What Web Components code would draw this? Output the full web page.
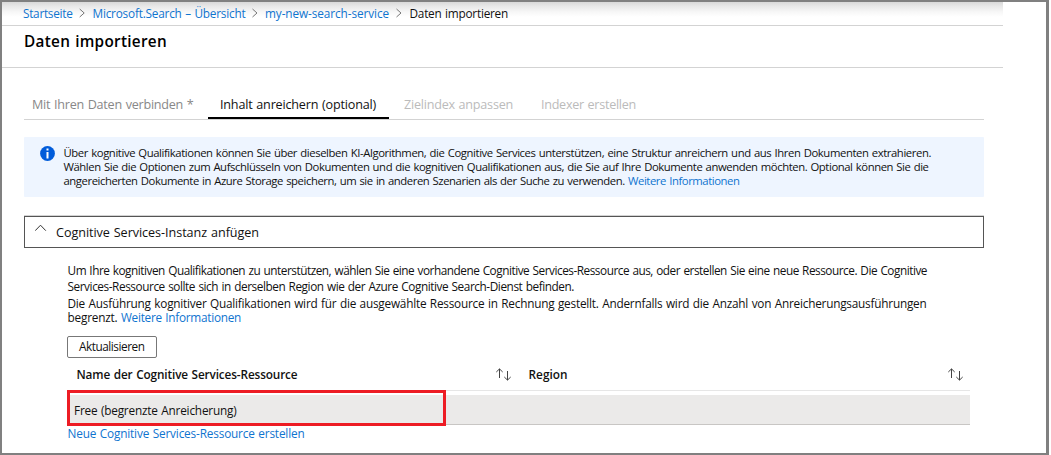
<!DOCTYPE html>
<html lang="de">
<head>
<meta charset="utf-8">
<title>Daten importieren</title>
<style>
html,body{margin:0;background:#fff}
body{font-family:"Open Sans","Noto Sans",sans-serif;font-size:12px;color:#111}
</style>
</head>
<body>
<import-page></import-page>
<script>
const define=(name,html,ready)=>{
  const t=document.createElement('template');t.innerHTML=html;
  customElements.define(name,class extends HTMLElement{
    constructor(){super();this.attachShadow({mode:'open'}).append(t.content.cloneNode(true));}
    connectedCallback(){if(ready)ready.call(this);}
  });
};

/* One line of text whose tracking is adjusted so that it takes up the width "w". */
define('text-run','<style>:host{display:inline-block;white-space:pre;line-height:16px;height:16px;word-spacing:.7px}span{display:inline-block}</style><span><slot></slot></span>',function(){
  const w=+this.getAttribute('w'),n=this.textContent.length;
  this.style.width=w+'px';
  const natural=this.shadowRoot.querySelector('span').getBoundingClientRect().width;
  this.style.letterSpacing=((w-natural)/n).toFixed(4)+'px';
});

define('crumb-bar',`<style>
:host{display:flex;box-sizing:border-box;width:1001px;height:24px;padding:3px 0 0 21px;border-bottom:1px solid #d3d3d3;background:linear-gradient(#d9d9d9,#e7e7e7 4px,#f7f7f7 10px,#fff 15px);color:#0f74cf;font-size:11.8px}
svg{display:block;margin-top:3px;flex:none}.now{color:#111}
</style>
<text-run w="49.5">Startseite</text-run>
<svg width="20" height="10" viewBox="0 0 20 10"><path d="M6.7 1L11.2 5L6.7 9" fill="none" stroke="#777"/></svg>
<text-run w="153">Microsoft.Search – Übersicht</text-run>
<svg width="19.5" height="10" viewBox="0 0 19.5 10"><path d="M6.5 1L11 5L6.5 9" fill="none" stroke="#777"/></svg>
<text-run w="124">my-new-search-service</text-run>
<svg width="20.5" height="10" viewBox="0 0 20.5 10"><path d="M7.5 1L12 5L7.5 9" fill="none" stroke="#777"/></svg>
<text-run class="now" w="98.5">Daten importieren</text-run>`);

define('page-title',`<style>:host{display:block;box-sizing:border-box;width:1001px;height:42px;padding:5px 0 0 22px;border-bottom:1px solid #d3d3d3;font-size:15.3px;font-weight:600;color:#000}</style><text-run w="143">Daten importieren</text-run>`);

define('wizard-tabs',`<style>
:host{display:flex;margin:28px 0 0 22px;width:960px;height:23px;border-bottom:1px solid #d3d3d3;color:#888;font-size:12.6px}
div{box-sizing:border-box;height:23px}
.a{width:184px;padding-left:8px}.b{width:181px;padding-left:12px;color:#111;border-bottom:2px solid #000}
.c{width:137px;padding-left:15px;color:#bbb}.d{padding-left:15px;color:#bbb}
</style>
<div class="a"><text-run w="161.5">Mit Ihren Daten verbinden *</text-run></div>
<div class="b"><text-run w="156">Inhalt anreichern (optional)</text-run></div>
<div class="c"><text-run w="109">Zielindex anpassen</text-run></div>
<div class="d"><text-run w="95">Indexer erstellen</text-run></div>`);

define('info-banner',`<style>
:host{display:flex;box-sizing:border-box;margin:17px 0 0 22px;width:960px;height:60px;padding:8px 0 0 16px;background:#eef5ff;border-radius:1px;font-size:11.3px}
svg{flex:none;margin:1px 8.5px 0 0}.l{height:14px;display:flex}.k{color:#0f74cf}
</style>
<svg width="15" height="15" viewBox="0 0 15 15"><circle cx="7.5" cy="7.5" r="7.4" fill="#015cda"/><path d="M6.5 2.5h2v2h-2zM6.5 6h2v6.5h-2z" fill="#fff"/></svg>
<div>
<div class="l"><text-run w="867.5">Über kognitive Qualifikationen können Sie über dieselben KI-Algorithmen, die Cognitive Services unterstützen, eine Struktur anreichern und aus Ihren Dokumenten extrahieren.</text-run></div>
<div class="l"><text-run w="865">Wählen Sie die Optionen zum Aufschlüsseln von Dokumenten und die kognitiven Qualifikationen aus, die Sie auf Ihre Dokumente anwenden möchten. Optional können Sie die</text-run></div>
<div class="l"><text-run w="564.5">angereicherten Dokumente in Azure Storage speichern, um sie in anderen Szenarien als der Suche zu verwenden. </text-run><text-run class="k" w="111.5">Weitere Informationen</text-run></div>
</div>`);

define('accordion-head',`<style>
:host{display:flex;box-sizing:border-box;margin:19px 0 0 22px;width:960px;height:32px;border:1px solid #555;box-shadow:0 -1px #d3d3d3;padding:8px 0 0 10px;font-size:12.6px}
svg{margin:-1px 9px 0 0}
</style><svg width="12" height="9" viewBox="0 0 12 9"><path d="M.2 6.7L5.5 1.2L10.8 6.7" fill="none" stroke="#333"/></svg><text-run w="203">Cognitive Services-Instanz anfügen</text-run>`);

define('refresh-button',`<style>
:host{display:block}button{display:block;box-sizing:border-box;width:90px;height:22px;border:1px solid #777;border-radius:2px;background:#fff;padding:0 0 2px 11px;text-align:left;font:11.8px "Open Sans",sans-serif;color:#111}
text-run{display:block}
</style><button><text-run w="65.5">Aktualisieren</text-run></button>`);

define('sort-icon',`<style>:host{display:block;width:16px;height:13px}svg{display:block}</style>
<svg width="16" height="13" viewBox="0 0 16 13"><path d="M4.5 10V1M1.3 4L4.5 .9L7.7 4M12.5 3V12M9.3 9L12.5 12.1L15.7 9" fill="none" stroke="#444"/></svg>`);

define('resource-table',`<style>
:host{display:block;position:relative;width:903px;height:68px;margin-top:0}
.h{display:flex;box-sizing:border-box;height:33px;padding-top:8px;border-bottom:1px solid #e6e6e6;font-weight:600;font-size:11.8px}
.c1,.c2{box-sizing:border-box;display:flex;justify-content:space-between;padding-left:9.5px}
.c1{width:443.5px}.c2{width:459.5px;padding:0 7.5px 0 18px}
sort-icon{margin-top:2px}
.r{box-sizing:border-box;margin-top:4px;height:30px;border-bottom:1px solid #c8c6c4;background:#ebeae9;padding:7px 0 0 7px;font-size:11.8px}
.mark{position:absolute;box-sizing:border-box;left:0;top:32px;width:379px;height:36px;border:3px solid #ed1c24}
</style>
<div class="h"><div class="c1"><text-run w="221">Name der Cognitive Services-Ressource</text-run><sort-icon></sort-icon></div><div class="c2"><text-run w="39">Region</text-run><sort-icon></sort-icon></div></div>
<div class="r"><text-run w="162.5">Free (begrenzte Anreicherung)</text-run></div><div class="mark"></div>`);

define('attach-panel',`<style>
:host{display:block;margin:14px 0 0 65px;font-size:11.8px}
.l{display:flex;height:16px;padding-left:.5px}.k{color:#0f74cf}
.l.x{height:17px}.l.y{height:14px}
refresh-button{margin-top:11px}
.l.z{margin-top:-1px}
</style>
<div class="l"><text-run w="859.5">Um Ihre kognitiven Qualifikationen zu unterstützen, wählen Sie eine vorhandene Cognitive Services-Ressource aus, oder erstellen Sie eine neue Ressource. Die Cognitive</text-run></div>
<div class="l x"><text-run w="506.5">Services-Ressource sollte sich in derselben Region wie der Azure Cognitive Search-Dienst befinden.</text-run></div>
<div class="l y"><text-run w="859">Die Ausführung kognitiver Qualifikationen wird für die ausgewählte Ressource in Rechnung gestellt. Andernfalls wird die Anzahl von Anreicherungsausführungen</text-run></div>
<div class="l"><text-run w="53.5">begrenzt. </text-run><text-run class="k" w="120">Weitere Informationen</text-run></div>
<refresh-button></refresh-button>
<resource-table></resource-table>
<div class="l k z"><text-run w="237">Neue Cognitive Services-Ressource erstellen</text-run></div>`);

define('import-page',`<style>
:host{display:block;box-sizing:border-box;width:1049px;height:455px;border:solid #808080;border-width:2px 3px 2px 2px;background:#fff;overflow:hidden}
</style><crumb-bar></crumb-bar><page-title></page-title><wizard-tabs></wizard-tabs><info-banner></info-banner><accordion-head></accordion-head><attach-panel></attach-panel>`);
</script>
</body>
</html>
